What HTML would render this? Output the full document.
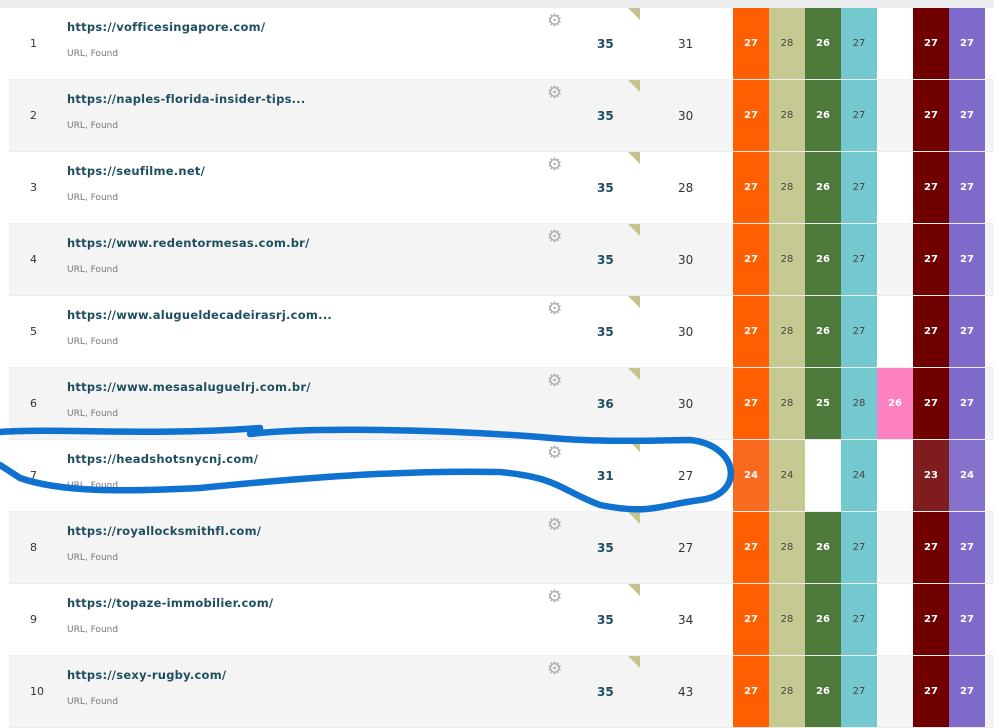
<!DOCTYPE html>
<html><head><meta charset="utf-8"><style>
body{margin:0;width:994px;height:724px;overflow:hidden;background:#fff;font-family:Verdana,"DejaVu Sans",sans-serif;position:relative}
.top{position:absolute;left:0;top:0;width:994px;height:8px;background:#eceeef}
.row{position:absolute;left:9px;width:985px;height:72px;border-bottom:1px dotted #e4e4e4;box-sizing:border-box}
.n{position:absolute;left:21px;top:29px;font-size:11px;color:#333}
.u{position:absolute;left:58px;top:12px;font-size:11.5px;font-weight:bold;color:#1f4e5f;letter-spacing:0.25px}
.f{position:absolute;left:58px;top:41px;font-size:9px;color:#777}
.g{position:absolute;left:538px;top:5px;font-size:17px;color:#aaa;line-height:17px}
.tri{position:absolute;left:619px;top:0;width:0;height:0;border-left:12px solid transparent;border-top:12px solid #c4c48f}
.a{position:absolute;left:588px;top:29px;font-size:12px;font-weight:bold;color:#1f4e5f}
.b{position:absolute;left:669px;top:29px;font-size:12px;color:#333}
.c{position:absolute;top:0;width:36px;height:71px;font-size:10px;font-weight:bold;text-align:center;line-height:72px;color:#fff}
.c.k{font-weight:normal}
</style></head><body>
<div class="top"></div>
<div id="rows"></div>
<script>
var d=[["https://vofficesingapore.com/",35,31],["https://naples-florida-insider-tips...",35,30],["https://seufilme.net/",35,28],["https://www.redentormesas.com.br/",35,30],["https://www.alugueldecadeirasrj.com...",35,30],["https://www.mesasaluguelrj.com.br/",36,30],["https://headshotsnycnj.com/",31,27],["https://royallocksmithfl.com/",35,27],["https://topaze-immobilier.com/",35,34],["https://sexy-rugby.com/",35,43]];
var h="";
for(var i=0;i<10;i++){
 var r=d[i],bg=i%2?"#f4f4f4":"#fff";
 var cols;
 if(i==6) cols=[["#f96a1f","#fff","24"],["#c6c992","#444","24"],["transparent","",""],["#73c9cd","#444","24"],["transparent","",""],["#7e1c1e","#fff","23"],["#8572cc","#fff","24"]];
 else cols=[["#ff5f00","#fff","27"],["#c6c992","#444","28"],["#4d7a3a","#fff",i==5?"25":"26"],["#73c9cd","#444",i==5?"28":"27"],[i==5?"#fd80c0":"transparent","#fff",i==5?"26":""],["#700000","#fff","27"],["#7e6acb","#fff","27"]];
 h+='<div class="row" style="top:'+(8+i*72)+'px;background:'+bg+'"><div class="n">'+(i+1)+'</div><div class="u">'+r[0]+'</div><div class="f">URL, Found</div><div class="g">&#9881;</div><div class="tri"></div><div class="a">'+r[1]+'</div><div class="b">'+r[2]+'</div>';
 for(var j=0;j<7;j++){h+='<div class="c'+((j==1||j==3)?' k':'')+'" style="left:'+(724+j*36)+'px;background:'+cols[j][0]+';color:'+cols[j][1]+'">'+cols[j][2]+'</div>';}
 h+='</div>';
}
document.getElementById("rows").innerHTML=h;
</script>
<svg style="position:absolute;left:0;top:0" width="994" height="724"><path d="M0,432 C60,428 150,436 260,428 L250,434 C300,428 420,428 540,437 C570,440 600,442 690,440 C740,445 745,495 700,500 C660,505 650,515 600,505 C560,490 560,478 500,472 C400,470 300,478 200,488 C120,492 60,492 20,478 L0,465" fill="none" stroke="#0f72d0" stroke-width="6.5" stroke-linecap="round" stroke-linejoin="round"/></svg>
</body></html>
